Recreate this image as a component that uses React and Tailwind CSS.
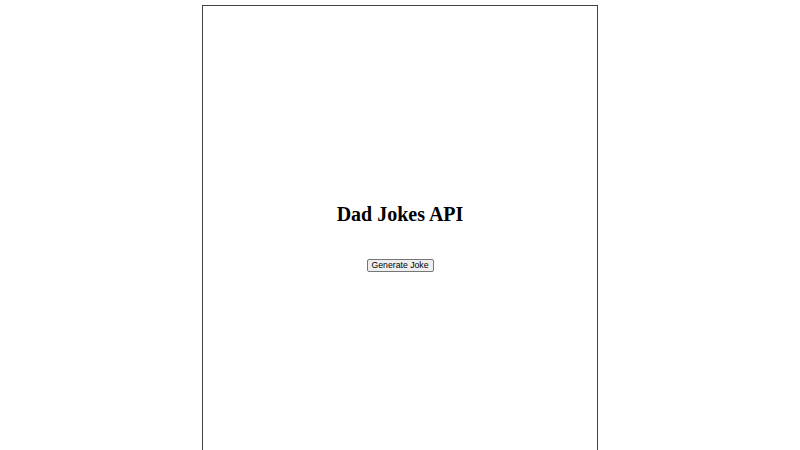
import React from "react";

const App = () => {
  const handleClick = () => {};

  return (
    <div className="w-full h-[450px] overflow-hidden bg-white">
      <div className="w-[396px] h-[600px] mx-auto mt-[5px] border border-[#444] flex flex-col items-center pt-[197px]">
        <h1 className="text-[20px] leading-[23px] font-bold text-black" style={{ fontFamily: '"Liberation Serif", serif' }}>
          Dad Jokes API
        </h1>
        <button
          onClick={handleClick}
          className="mt-[33px] h-[13px] px-[4px] text-[8.7px] leading-[11px] text-black bg-[#efefef] border border-[#767676] rounded-[2px]"
          style={{ fontFamily: '"Liberation Sans", Arial, sans-serif' }}
        >
          Generate Joke
        </button>
      </div>
    </div>
  );
};

export default App;
